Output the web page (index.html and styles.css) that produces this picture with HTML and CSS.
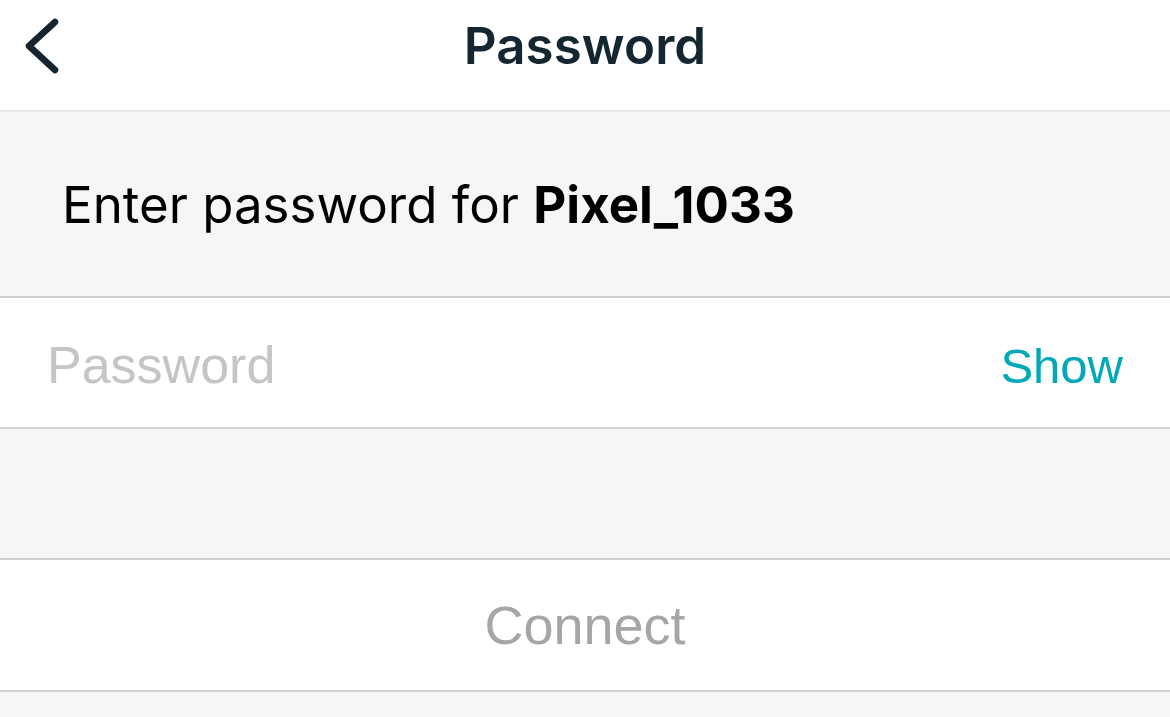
FILE: index.html
```html
<!DOCTYPE html>
<html>
<head>
<meta charset="utf-8">
<link rel="stylesheet" href="styles.css">
</head>
<body>
<div class="screen">
  <header class="nav">
    <button class="back" aria-label="Back">
      <svg width="40" height="60" viewBox="0 0 40 60"><path d="M31 7 L5 31 L31 55" fill="none" stroke="#142430" stroke-width="6.5" stroke-linecap="round" stroke-linejoin="round"/></svg>
    </button>
    <h1 class="title">Password</h1>
  </header>
  <section class="prompt">
    <p>Enter password for <b>Pixel_1033</b></p>
  </section>
  <div class="field">
    <span class="placeholder">Password</span>
    <span class="show">Show</span>
  </div>
  <div class="spacer"></div>
  <div class="action">
    <span class="connect">Connect</span>
  </div>
  <div class="rest"></div>
</div>
</body>
</html>
```

FILE: styles.css
```css
* { box-sizing: border-box; }
html, body { margin: 0; padding: 0; }
body {
  width: 1170px;
  height: 717px;
  overflow: hidden;
  background: #f6f6f6;
  font-family: Inter, "Noto Sans", sans-serif;
}
.screen { display: flex; flex-direction: column; }
.nav {
  height: 112px;
  background: #fff;
  border-bottom: 2px solid #e8e8e8;
  display: flex;
  align-items: center;
  justify-content: center;
  position: relative;
}
.back {
  position: absolute;
  left: 24px;
  top: 15px;
  padding: 0;
  border: 0;
  background: none;
  width: 40px;
  height: 60px;
}
.back svg { display: block; }
.title {
  margin: 0 0 19px 0;
  font-size: 51px;
  font-weight: 600;
  color: #14262f;
  letter-spacing: 0.1px;
}
.prompt {
  height: 186px;
  background: #f6f6f6;
  border-bottom: 2px solid #d0d0d0;
  display: flex;
  align-items: center;
  padding-left: 62px;
}
.prompt p {
  margin: 0;
  font-size: 51px;
  color: #000;
}
.prompt b { font-weight: 700; }
.field {
  height: 131px;
  background: #fff;
  border-bottom: 2px solid #d0d0d0;
  display: flex;
  align-items: center;
  justify-content: space-between;
  padding: 0 47px 0 47px;
  font-family: "Liberation Sans", Arial, sans-serif;
}
.placeholder { color: #c5c5c5; font-size: 52px; margin-top: 4px; }
.show { color: #00a9b5; font-size: 49px; margin-top: 6px; }
.spacer {
  height: 131px;
  background: #f6f6f6;
  border-bottom: 2px solid #d0d0d0;
}
.action {
  height: 132px;
  background: #fff;
  border-bottom: 2px solid #d0d0d0;
  display: flex;
  align-items: center;
  justify-content: center;
  font-family: "Liberation Sans", Arial, sans-serif;
  font-size: 54px;
}
.connect { color: #a6a6a6; }
.rest { flex: 1; background: #f6f6f6; }
```
